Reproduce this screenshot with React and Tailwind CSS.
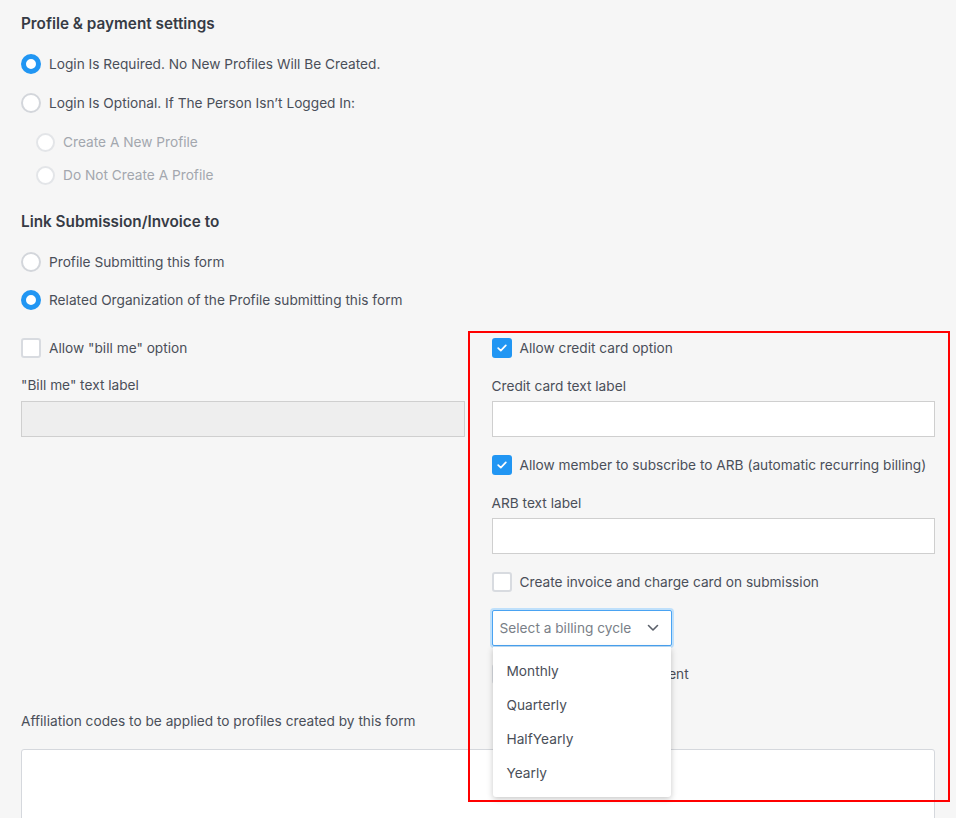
import React from "react";

const Radio = ({ checked, disabled, label, className = "" }) => (
  <label className={`flex h-5 items-center gap-[8px] ${className}`}>
    <span
      className={`box-border shrink-0 rounded-full bg-white ${
        disabled ? "h-[19px] w-[19px]" : "h-5 w-5"
      } ${
        checked
          ? "border-[5px] border-[#2196f3]"
          : disabled
          ? "border-2 border-[#e3e5e8]"
          : "border-2 border-[#d3d6db]"
      }`}
    />
    <span className={disabled ? "text-[#a3a7ae]" : "text-[#4a4f59]"}>
      {label}
    </span>
  </label>
);

const Checkbox = ({ checked, label, className = "" }) => (
  <label className={`flex h-5 items-center gap-[8px] whitespace-nowrap ${className}`}>
    {checked ? (
      <span className="flex h-5 w-5 shrink-0 items-center justify-center rounded-[3px] bg-[#2196f3]">
        <svg width="10" height="8" viewBox="0 0 10 8" fill="none">
          <path
            d="M1.2 4.2 L3.8 6.6 L8.8 1.4"
            stroke="white"
            strokeWidth="1.7"
            strokeLinecap="round"
            strokeLinejoin="round"
          />
        </svg>
      </span>
    ) : (
      <span className="box-border h-5 w-5 shrink-0 rounded-[3px] border-2 border-[#d8dbe0] bg-white" />
    )}
    <span className="text-[#4a4f59]">{label}</span>
  </label>
);

export default function App() {
  return (
    <div className="relative min-h-[818px] overflow-hidden bg-[#f6f6f6] px-[21px] pt-[14px] font-['Inter',sans-serif] text-[13.7px] leading-5 text-[#4a4f59]">
      {/* PROFILE */}
      <h2 className="h-5 text-[15.3px] font-semibold text-[#363b45]">
        Profile &amp; payment settings
      </h2>

      <Radio checked label="Login Is Required. No New Profiles Will Be Created." className="mt-5" />
      <Radio label="Login Is Optional. If The Person Isn’t Logged In:" className="mt-[19px]" />

      <div className="pl-[15px]">
        <Radio disabled label="Create A New Profile" className="mt-[19px]" />
        <Radio disabled label="Do Not Create A Profile" className="mt-[13px]" />
      </div>

      {/* LINK */}
      <h2 className="mt-[27px] h-5 text-[15.3px] font-semibold text-[#363b45]">
        Link Submission/Invoice to
      </h2>

      <Radio label="Profile Submitting this form" className="mt-5" />
      <Radio checked label="Related Organization of the Profile submitting this form" className="mt-[18px]" />

      {/* PAYMENT OPTIONS */}
      <div className="mt-[28px] grid grid-cols-2 gap-x-[27px]">
        <div>
          <Checkbox label={'Allow "bill me" option'} />
          <div className="mt-[17px] h-5">"Bill me" text label</div>
          <div className="mt-[6px] h-9 border border-[#cfcfcf] bg-[#eeeeee]" />
        </div>

        <div className="relative">
          <Checkbox checked label="Allow credit card option" />
          <div className="mt-[18px] h-5">Credit card text label</div>
          <div className="mt-[5px] h-9 border border-[#cfcfcf] bg-white" />

          <Checkbox
            checked
            label="Allow member to subscribe to ARB (automatic recurring billing)"
            className="mt-[18px]"
          />
          <div className="mt-[18px] h-5">ARB text label</div>
          <div className="mt-[5px] h-9 border border-[#cfcfcf] bg-white" />

          <Checkbox label="Create invoice and charge card on submission" className="mt-[18px]" />

          <div className="relative mt-[18px] w-[180px]">
            <div className="flex h-9 items-center justify-between rounded-[2px] border border-[#4aa3f2] bg-white pl-[7px] pr-[12px] shadow-[0_0_0_2px_#bfe0fb]">
              <span className="text-[#7a7f88]">Select a billing cycle</span>
              <svg width="12" height="8" viewBox="0 0 12 8" fill="none">
                <path
                  d="M1.5 1.5 L6 6 L10.5 1.5"
                  stroke="#5b606a"
                  strokeWidth="1.6"
                  strokeLinecap="round"
                  strokeLinejoin="round"
                />
              </svg>
            </div>

            <ul className="absolute left-[1px] top-[37px] z-10 w-[178px] rounded-b-[3px] bg-white py-[7px] text-[#4a4f59] shadow-[0_2px_6px_rgba(0,0,0,0.22)]">
              {["Monthly", "Quarterly", "HalfYearly", "Yearly"].map((item) => (
                <li key={item} className="flex h-[34px] items-center pl-[14px]">
                  {item}
                </li>
              ))}
            </ul>
          </div>

          <Checkbox label="Allow installment payment" className="mt-[18px]" />
        </div>
      </div>

      {/* AFFILIATION */}
      <div className="mt-[27px] h-5">
        Affiliation codes to be applied to profiles created by this form
      </div>
      <div className="mt-[18px] h-[120px] rounded-t-[3px] border border-[#d5d8dd] bg-white" />

      {/* highlight */}
      <div className="pointer-events-none absolute left-[468px] top-[331px] z-20 h-[471px] w-[482px] border-2 border-[#ff0000]" />
    </div>
  );
}
